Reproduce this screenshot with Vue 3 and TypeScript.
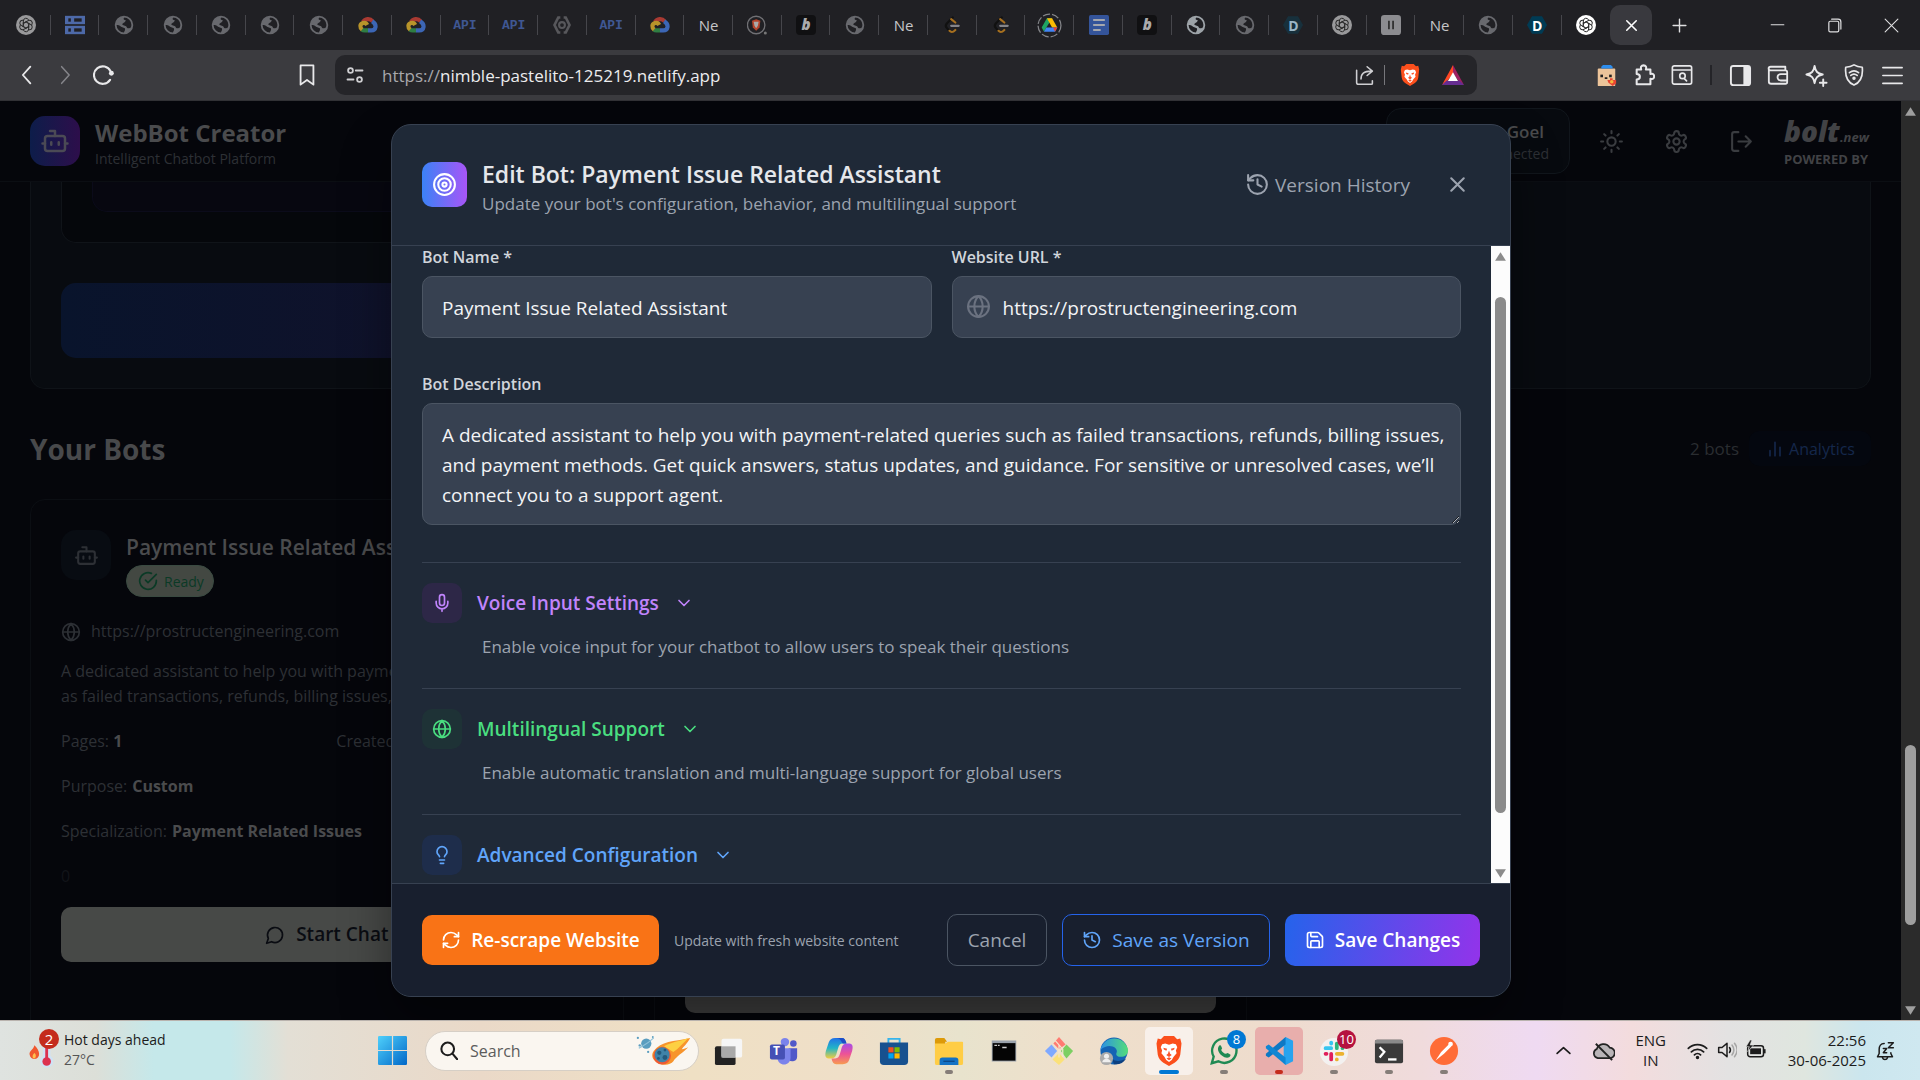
<script setup lang="ts">
import { h, ref } from 'vue'

const line = (w: number, body: string, extra = '') =>
  `<g fill="none" stroke="currentColor" stroke-width="${w}" stroke-linecap="round" stroke-linejoin="round" ${extra}>${body}</g>`

const globePaths = '<circle cx="12" cy="12" r="10"/><path d="M12 2a14.5 14.5 0 0 0 0 20 14.5 14.5 0 0 0 0-20M2 12h20"/>'
const knot = '<path d="M8.800 12V7.200a3.300 3.300 0 0 1 6.300-1.400M12 8.300l4.200 2.400"/>'
const lion = '<path d="M6.500 6.600 9 6l3 .9L15 6l2.500.6L18.600 9l-1.100 2.600.600 2.200-2.400 2.700-1.500 2.600L12 20.800l-2.200-1.700-1.500-2.600-2.400-2.700.600-2.200L5.400 9z" fill="#fff"/><path d="M7.500 9.300l3 .900-.600 1.500-2-.900zM16.500 9.300l-3 .900.600 1.500 2-.900zM12 11.500l.900 2.700 1.300.900L12 16.800l-2.200-1.700 1.300-.900zM10 18l2-1 2 1-2 1.300z" fill="#fb542b"/>'

const icons: Record<string, string> = {
  bot: line(2, '<path d="M12 8V4H8"/><rect width="16" height="12" x="4" y="8" rx="2"/><path d="M2 14h2M20 14h2M15 13v2M9 13v2"/>'),
  target: line(2, '<circle cx="12" cy="12" r="10"/><circle cx="12" cy="12" r="6"/><circle cx="12" cy="12" r="2"/>'),
  history: line(2, '<path d="M3 12a9 9 0 1 0 9-9 9.750 9.750 0 0 0-6.740 2.740L3 8"/><path d="M3 3v5h5M12 7v5l4 2"/>'),
  x: line(2, '<path d="M18 6 6 18M6 6l12 12"/>'),
  globe: line(2, globePaths),
  mic: line(2, '<path d="M12 2a3 3 0 0 0-3 3v7a3 3 0 0 0 6 0V5a3 3 0 0 0-3-3Z"/><path d="M19 10v2a7 7 0 0 1-14 0v-2M12 19v3"/>'),
  down: line(2, '<path d="m6 9 6 6 6-6"/>'),
  bulb: line(2, '<path d="M15 14c.2-1 .7-1.700 1.500-2.500 1-.9 1.500-2.200 1.500-3.500A6 6 0 0 0 6 8c0 1 .2 2.200 1.500 3.500.7.7 1.300 1.500 1.500 2.500M9 18h6M10 22h4"/>'),
  refresh: line(2, '<path d="M3 12a9 9 0 0 1 9-9 9.750 9.750 0 0 1 6.740 2.740L21 8"/><path d="M21 3v5h-5M21 12a9 9 0 0 1-9 9 9.750 9.750 0 0 1-6.740-2.740L3 16"/><path d="M8 16H3v5"/>'),
  save: line(2, '<path d="M15.200 3a2 2 0 0 1 1.400.6l3.800 3.800a2 2 0 0 1 .6 1.400V19a2 2 0 0 1-2 2H5a2 2 0 0 1-2-2V5a2 2 0 0 1 2-2z"/><path d="M17 21v-7a1 1 0 0 0-1-1H8a1 1 0 0 0-1 1v7M7 3v4a1 1 0 0 0 1 1h7"/>'),
  check: line(2, '<path d="M22 11.080V12a10 10 0 1 1-5.930-9.140"/><path d="m9 11 3 3L22 4"/>'),
  chat: line(2, '<path d="M7.900 20A9 9 0 1 0 4 16.100L2 22Z"/>'),
  chart: line(2, '<path d="M18 20V10M12 20V4M6 20v-6"/>'),
  sun: line(2, '<circle cx="12" cy="12" r="4"/><path d="M12 2v2M12 20v2M4.930 4.930l1.410 1.410M17.660 17.660l1.410 1.410M2 12h2M20 12h2M6.340 17.660l-1.410 1.410M19.070 4.930l-1.410 1.410"/>'),
  gear: line(2, '<path d="M12.220 2h-.44a2 2 0 0 0-2 2v.18a2 2 0 0 1-1 1.730l-.43.25a2 2 0 0 1-2 0l-.15-.08a2 2 0 0 0-2.730.73l-.22.38a2 2 0 0 0 .73 2.730l.15.1a2 2 0 0 1 1 1.720v.51a2 2 0 0 1-1 1.740l-.15.09a2 2 0 0 0-.73 2.730l.22.38a2 2 0 0 0 2.730.73l.15-.08a2 2 0 0 1 2 0l.43.25a2 2 0 0 1 1 1.730V20a2 2 0 0 0 2 2h.44a2 2 0 0 0 2-2v-.18a2 2 0 0 1 1-1.730l.43-.25a2 2 0 0 1 2 0l.15.08a2 2 0 0 0 2.730-.73l.22-.39a2 2 0 0 0-.73-2.730l-.15-.08a2 2 0 0 1-1-1.740v-.5a2 2 0 0 1 1-1.740l.15-.09a2 2 0 0 0 .73-2.730l-.22-.38a2 2 0 0 0-2.730-.73l-.15.08a2 2 0 0 1-2 0l-.43-.25a2 2 0 0 1-1-1.730V4a2 2 0 0 0-2-2z"/><circle cx="12" cy="12" r="3"/>'),
  logout: line(2, '<path d="M9 21H5a2 2 0 0 1-2-2V5a2 2 0 0 1 2-2h4M16 17l5-5-5-5M21 12H9"/>'),
  up: '<path d="M12 4 22 20H2z" fill="currentColor"/>',
  dn: '<path d="M12 20 2 4h20z" fill="currentColor"/>',

  gpt: '<circle cx="12" cy="12" r="12" fill="currentColor"/><g fill="none" stroke="#2a2a2a" stroke-width="1.200" stroke-linecap="round">' +
    [0, 60, 120, 180, 240, 300].map(a => `<g transform="rotate(${a} 12 12)">${knot}</g>`).join('') + '</g>',
  server: '<g fill="#4d69a8"><rect x="0" y="1" width="24" height="10"/><rect x="0" y="13" width="24" height="10"/></g><g fill="#202024"><rect x="4" y="4" width="3" height="4"/><rect x="11" y="4" width="9" height="4"/><rect x="4" y="16" width="3" height="4"/><rect x="11" y="16" width="9" height="4"/></g>',
  world: '<circle cx="12" cy="12" r="10" fill="none" stroke="currentColor" stroke-width="2.200"/><path d="M13 2c-2 2-2 4 1 4 0 3-3 3-4 5 0 2 4 1 5 3 1 3 4 2 6 0C20 19 16 22 12 22c0-3 2-3 1-6-2-1-4-1-6-3-2-1-3-1-5-1C2 6 7 2 13 2z" fill="currentColor"/>',
  cloud: '<g fill="none" stroke-width="5"><path d="M6 8.500A7 7 0 0 1 17.500 7.500" stroke="#a93a32"/><path d="M17 7.500c3 2 4.500 4 4 7-.5 3-2.500 4-5 4H12" stroke="#3c66b5"/><path d="M12 18.500H8c-1.500 0-2.500-.3-3.500-1" stroke="#2f7d43"/><path d="M5 17.500C2 15 2 11 6 9.700c2-.6 4 .3 5 2.300" stroke="#b8942a"/></g>',
  hex: '<path d="M10 3H7.500L3 12l4.500 9H10M14 3h2.500l4.500 9-4.500 9H14" fill="none" stroke="#57575b" stroke-width="3.200"/><circle cx="12" cy="12" r="3.500" fill="none" stroke="#57575b" stroke-width="2.500"/>',
  lionTab: '<circle cx="11" cy="12" r="10.500" fill="none" stroke="#707074" stroke-width="1.600"/><path d="M6 7l5-2 5 2-1 8-4 4-4-4z" fill="#b5452d"/><path d="M8 8h6l-1 5-2 3-2-3z" fill="#aaa"/><circle cx="22" cy="21.500" r="1.800" fill="#777"/>',
  leet: '<g fill="none" stroke-width="2.600" stroke-linecap="round"><path d="M13 3 6 10c-2 2-2 4 0 6l3 3" stroke="#111"/><path d="M11 5l5 4M9 19c3 3 5 1 7-1" stroke="#a7701f"/><path d="M11 13h9" stroke="#85858a"/></g>',
  drive: '<circle cx="12" cy="12" r="11" fill="none" stroke="#85868a" stroke-width="1.200" stroke-dasharray="7 2"/><path d="M9.500 5h5l-5.500 9-2.300 4L4.500 14z" fill="#1fa463"/><path d="M9.500 5h5l5 9h-5z" fill="#fbbc04"/><path d="M6.700 18 9 14h10.500l-2.200 4z" fill="#4285f4"/><path d="M15.500 14h4l-2.200 4z" fill="#ea4335"/>',
  docs: '<rect x="0" y="0" width="24" height="24" rx="2" fill="#34549a"/><path d="M5 6h14M5 12h14M5 18h9" stroke="#a5a7ad" stroke-width="2.400"/>',
  dhex: '<path d="M6 1.500h12L24 12l-6 10.500H6L0 12z" fill="currentColor"/>',
  pause: '<rect width="24" height="24" rx="4" fill="#8c8c90"/><path d="M9.500 7v10M14.500 7v10" stroke="#333" stroke-width="2.200"/>',
  plus: line(2, '<path d="M12 3v18M3 12h18"/>'),
  min: line(1.5, '<path d="M3 11h18"/>'),
  restore: line(1.700, '<rect x="4" y="6" width="14" height="15" rx="2"/><path d="M8 3h9a4 4 0 0 1 4 4v10"/>'),
  close: line(1.500, '<path d="M3 3l18 18M21 3 3 21"/>'),
  back: line(2.200, '<path d="M16 2 7 12l9 10"/>'),
  fwd: line(1.800, '<path d="M8 2l9 10-9 10"/>'),
  reload: line(2.400, '<path d="M19.500 17A10 10 0 1 1 20 7"/>') + '<circle cx="21" cy="9.500" r="2.800" fill="currentColor"/>',
  mark: line(2, '<path d="M5 1.500h14v21l-7-5-7 5z"/>'),
  tune: line(2.400, '<circle cx="6" cy="6" r="3.200"/><path d="M13 6h9M2 18h8"/><circle cx="18" cy="18" r="3.200"/>'),
  share: line(1.800, '<path d="M3 6v14a2 2 0 0 0 2 2h15a1 1 0 0 0 1-1v-3M8 16c0-6 3-9 12-9M15 2l6 5-6 5"/>'),
  brave: '<path d="M12 0h4l2.500 2.500L21 2l1 4-1 9c-.5 3-2.500 5-4.500 6.300L12 24l-4.500-2.700C5.500 20 3.500 18 3 15L2 6l1-4 2.500.5L8 0z" fill="#fb4f1c"/>' + lion,
  bat: '<path d="M12 1 0 23l5-3 7-10z" fill="#ff4724"/><path d="M12 1l12 22-5-3-7-10z" fill="#9e1f63"/><path d="M0 23h24l-5-5H5z" fill="#662d91"/><path d="m12 9 5.500 9.500h-11z" fill="#fff"/>',
  crate: '<rect x="2" y="4" width="20" height="20" rx="1" fill="#ecc49a"/><path d="M6 4V2l2-2h9l2 2v2z" fill="#2d8ded"/><g fill="#222"><rect x="5" y="11" width="3" height="3"/><rect x="15" y="11" width="3" height="3"/><rect x="10" y="14" width="3" height="2"/></g><path d="M13 17h3v-2h3v2h4v4l-4 3-5-4z" fill="#e84532"/><circle cx="18" cy="19" r="2" fill="#f6b73c"/>',
  puzzle: line(2.200, '<path d="M4 6h5c-1-3 0-4.500 2.500-4.500S15 3 14 6h5v5c3-1 4 .5 4 2.500s-1 3.500-4 2.500v6H4v-5c3 0 3.500-1.500 3.500-3S7 11 4 11z"/>'),
  find: line(1.800, '<rect x="1.500" y="2" width="21" height="20" rx="2"/><path d="M2 6.500h20M14.500 16l2.500 2.500"/><circle cx="12.500" cy="13" r="3"/>'),
  panel: '<rect x="2" y="2" width="20" height="20" rx="2.500" fill="none" stroke="currentColor" stroke-width="2"/><path d="M15 2h5a2 2 0 0 1 2 2v16a2 2 0 0 1-2 2h-5z" fill="currentColor"/>',
  wallet: line(2, '<path d="M2 5v14c0 1.500 1 2.500 2.500 2.500H20a2 2 0 0 0 2-2V9a2 2 0 0 0-2-2H4C1 7 1 3 4 3h16v3M22 11h-7a3.500 3.500 0 0 0 0 7h7"/>'),
  sparkle: line(2, '<path d="M10 2c1 6 3 8 8.500 9C13 12 11 14 10 20 9 14 7 12 1.500 11 7 10 9 8 10 2zM19 16v7M15.500 19.500h7"/>'),
  vpn: line(1.800, '<path d="M12 1c3 2 6 2.500 9 2.500C22 13 19 20 12 23 5 20 2 13 3 3.500 6 3.500 9 3 12 1z"/><path d="M7 9.500c3-2.500 7-2.500 10 0M8.500 12.500c2-1.700 5-1.700 7 0"/><circle cx="12" cy="15.500" r="1"/>'),
  menu: line(1.900, '<path d="M1 3h22M1 12h22M1 21h22"/>'),

  weather: '<path d="M6 12c3 3 5 6 5 9a5 5 0 0 1-10 1c-1-4 4-5 5-10z" fill="#f0582f"/><path d="M6 20c2 1 2 5 0 6-3-1-2-4 0-6z" fill="#ffc04d"/><path d="M15 6h8v17a7 7 0 1 1-8 0z" fill="#cfe2f5"/><path d="M19 10v18" stroke="#dc3150" stroke-width="3"/><circle cx="19" cy="29" r="4.500" fill="#dc3150"/>',
  win: '<defs><linearGradient id="winfill" x2="1" y2="1"><stop stop-color="#4fd0fb"/><stop offset="1" stop-color="#0167c8"/></linearGradient></defs><path d="M0 1a1 1 0 0 1 1-1h10.500v11.500H0zM12.500 0H23a1 1 0 0 1 1 1v10.500H12.500zM0 12.500h11.500V24H1a1 1 0 0 1-1-1zM12.500 12.500H24V23a1 1 0 0 1-1 1H12.500z" fill="url(#winfill)"/>',
  search: line(2.600, '<circle cx="11" cy="10" r="8"/><path d="m17 16 6 7"/>'),
  comet: '<g fill="#5a9dbf"><circle cx="11" cy="9" r="5.500"/><circle cx="2" cy="3" r="1.200"/><circle cx="4" cy="11" r="1.300"/><circle cx="13" cy="18" r="1.200"/><circle cx="18" cy="2" r="1"/></g><path d="M3 14c5-3 10-5 16-11" stroke="#8fc0d8" stroke-width="1.200" fill="none"/><path d="M19 17C27 6 40 7 58 3c-3 6-7 9-9 12 3 0 4-1 7-2-6 6-13 10-16 15-3 4-10 5-16 2-7-3-8-9-5-13z" fill="#f7942c"/><path d="M30 12c8-5 16-5 26-9-5 5-10 11-16 15z" fill="#fdd043"/><circle cx="28" cy="22" r="9.500" fill="#ee5a32"/><circle cx="28" cy="21" r="8" fill="#3f83a8"/><g fill="#245a7c"><circle cx="25" cy="19" r="2.300"/><circle cx="31" cy="24" r="2.600"/><circle cx="31" cy="16" r="1.500"/><circle cx="24" cy="25" r="1.500"/></g>',
  taskview: '<rect x="1" y="11" width="22" height="20" rx="2" fill="#222"/><rect x="8" y="3" width="22" height="20" rx="2" fill="#f6f6f6"/><path d="M8 11h15v12H8z" fill="#a9a9a9"/>',
  teams: '<circle cx="17" cy="6.500" r="4.500" fill="#7b83eb"/><circle cx="26" cy="8" r="3.500" fill="#5059c9"/><path d="M21 13h9v9a5 5 0 0 1-9 3z" fill="#5059c9"/><path d="M9 13h14v10c0 10-14 10-14 0z" fill="#7b83eb"/><rect x="1" y="9" width="16" height="16" rx="2" fill="#4650b5"/>',
  copilot: '<defs><linearGradient id="cpa" x2="0" y2="1"><stop stop-color="#2170e8"/><stop offset=".5" stop-color="#23b6c6"/><stop offset="1" stop-color="#f3cd3f"/></linearGradient><linearGradient id="cpb" x2="0" y2="1"><stop stop-color="#a64de8"/><stop offset=".5" stop-color="#ed5297"/><stop offset="1" stop-color="#f79a50"/></linearGradient></defs><path d="M12 2h7c3 0 4 2 5 6h-4c-3 0-4 2-5 5l-2 7c-1 3-3 4-6 4H5c-4 0-4-4-3-8l3-9c1-3 3-5 7-5z" fill="url(#cpa)"/><path d="M20 30h-7c-3 0-4-2-5-6h4c3 0 4-2 5-5l2-7c1-3 3-4 6-4h2c4 0 4 4 3 8l-3 9c-1 3-3 5-7 5z" fill="url(#cpb)"/><path d="M13 2h6c3 0 4 2 5 6h-4c-2-3-3-6-7-6z" fill="#1d4ec7"/>',
  store: '<path d="M10 8V3h12v5" fill="none" stroke="#35b4ec" stroke-width="2"/><path d="M1 7h30v20a4 4 0 0 1-4 4H5a4 4 0 0 1-4-4z" fill="#17518f"/><path d="M10 12h5.500v5.500H10z" fill="#f25022"/><path d="M16.500 12H22v5.500h-5.500z" fill="#7fba00"/><path d="M10 18.500h5.500V24H10z" fill="#00a4ef"/><path d="M16.500 18.500H22V24h-5.500z" fill="#ffb900"/>',
  files: '<path d="M1 4a2 2 0 0 1 2-2h8l3 4h-2v5H1z" fill="#dd9a08"/><path d="M1 8h11l3-2h15a1 1 0 0 1 1 1v22a2 2 0 0 1-2 2H3a2 2 0 0 1-2-2z" fill="#ffcd45"/><path d="M6 31v-5a3 3 0 0 1 3-3h14a3 3 0 0 1 3 3v5z" fill="#1372c4"/><path d="M10 27h12" stroke="#0b4a8a" stroke-width="1.500"/>',
  cmd: '<rect x="2" y="4" width="28" height="24" fill="#9aa2ab"/><rect x="3" y="7" width="26" height="20" fill="#050505"/><path d="M5 9.500h3M9 9.500h2M14 12h5" stroke="#ccc" stroke-width="1.500"/>',
  git: '<path d="M16 1l7 8-7 5-6-6z" fill="#ff7b72"/><path d="m24 9 7 7-7 8-6-8z" fill="#7ccf62"/><path d="m8 9 6 7-6 7-7-7z" fill="#7fa9ff"/><path d="m16 18 6 7-6 6-7-6z" fill="#fbe17a"/><path d="M12 5l8 9v8M16 9v14" stroke="#f4e6cf" stroke-width="1.300" fill="none"/>',
  edge: '<defs><linearGradient id="edgefill" x2="1"><stop stop-color="#2b8fe6"/><stop offset="1" stop-color="#52dd79"/></linearGradient></defs><circle cx="16" cy="16" r="14.500" fill="#1463b4"/><path d="M1.500 15A15 15 0 0 1 31 15c0 6-5 8-10 7-3-1-3-3-2-5 1-5-9-10-17.500-2z" fill="url(#edgefill)"/><path d="M12 20c2 8 10 8 17 4-3 5-8 7-13 6z" fill="#0d4080"/><circle cx="8" cy="24" r="7" fill="#aaa"/><circle cx="8" cy="21.500" r="2.700" fill="#eee"/><path d="M3.500 28c0-5 9-5 9 0z" fill="#eee"/>',
  whatsapp: '<path d="M3 29l2-7A13 13 0 1 1 10 27z" fill="none" stroke="#1f8a53" stroke-width="2.500"/><path d="M11 10c2-1 2 1 3 3l-1 2c1 2 3 4 5 4l2-1 3 2c0 4-6 4-9 1-4-3-6-8-3-11z" fill="#1f8a53"/>',
  vscode: '<path d="M23 1l8 4v22l-8 4-2-3V4z" fill="#27a3ef"/><path d="M23 1v8L5 23l-3-2v-2z" fill="#0e78c4"/><path d="M23 31v-8L5 9l-3 2v2z" fill="#1186d3"/>',
  slack: '<circle cx="16" cy="17" r="15" fill="#f3f1f0"/><g stroke-width="4" stroke-linecap="round"><path d="M7 13h6M13 7v1" stroke="#36c5f0"/><path d="M19 8v5M25 13h0" stroke="#2eb67d"/><path d="M19 19h6M19 25v0" stroke="#ecb22e"/><path d="M13 19v6M7 19h1" stroke="#e01e5a"/></g>',
  terminal: '<rect x="1" y="4" width="30" height="25" rx="2" fill="#3a3a3a"/><path d="M1 8V6a2 2 0 0 1 2-2h26a2 2 0 0 1 2 2v2z" fill="#8a8a8a"/><path d="M6 12l5 5-5 6" fill="none" stroke="#fff" stroke-width="2.500"/><path d="M15 25h9" stroke="#fff" stroke-width="2.500"/>',
  postman: '<circle cx="16" cy="16" r="15" fill="#ff6c37"/><path d="M7 26l6-9 8-8 3 2-8 8z" fill="#fff"/><circle cx="23" cy="8.500" r="2.500" fill="#fff"/>',
  caret: line(2.400, '<path d="m3 16 9-8 9 8"/>'),
  cloudOff: '<path d="M6 20a5 5 0 0 1-1-9.500A7.500 7.500 0 0 1 18.500 9 5.500 5.500 0 0 1 18 20z" fill="#b9b4b7" stroke="#222" stroke-width="1.800"/><path d="m4 5 17 17" stroke="#222" stroke-width="2"/>',
  wifi: line(2, '<path d="M1.500 9.500a15 15 0 0 1 21 0M5 13.500a10 10 0 0 1 14 0M8.500 17a5 5 0 0 1 7 0"/><circle cx="12" cy="20" r="1"/>'),
  sound: line(1.800, '<path d="M2 9v6h4l6 5V4L6 9zM15 9c1.500 2 1.500 4 0 6"/>') + line(1.800, '<path d="M18 6c3 4 3 8 0 12M21 4c4 5 4 11 0 16"/>', 'opacity=".3"'),
  battery: '<rect x="2" y="7" width="19" height="13" rx="3" fill="none" stroke="#1c1c1c" stroke-width="1.800"/><rect x="5" y="10" width="13" height="7" fill="#1c1c1c"/><path d="M22.500 11v5" stroke="#1c1c1c" stroke-width="2"/><path d="M5 0 0 8h4l-2 6 7-8H5l2-6z" fill="#1c1c1c" stroke="#e2e4e2" stroke-width=".7"/>',
  bell: line(1.800, '<path d="M11 3c-4 0-6 3-6 7v5l-2 4h18l-2-4v-1M9 20c1 3 5 3 6 0M16 2h6l-6 6h6M10 9h4l-4 5h4"/>'),
}

interface IconProps { n: string; s?: number }
const Icon = (p: IconProps) => {
  const box = ['weather', 'taskview', 'teams', 'copilot', 'store', 'files', 'cmd', 'git', 'edge', 'whatsapp', 'vscode', 'slack', 'terminal', 'postman'].includes(p.n)
    ? (p.n === 'weather' ? '0 0 26 36' : '0 0 32 32')
    : p.n === 'comet' ? '0 0 60 34' : '0 0 24 24'
  return h('svg', { viewBox: box, width: p.n === 'comet' ? 56 : (p.s ?? 20), height: p.s ?? 20, 'aria-hidden': 'true', innerHTML: icons[p.n] })
}

const tabs = ['gpt', 'server', 'world', 'world', 'world', 'world', 'world', 'cloud', 'cloud', 't:API', 't:API', 'hex', 't:API', 'cloud',
  't:Ne', 'lionTab', 't:b', 'world', 't:Ne', 'leet', 'leet', 'drive', 'docs', 't:b', 'world+', 'world', 't:D', 'gpt', 'pause', 't:Ne', 'world', 't:D+', 'gpt+']

const tabName = (t: string) => t.replace('+', '')
const textOf = (t: string) => tabName(t).slice(2)

const botName = ref('Payment Issue Related Assistant')
const websiteUrl = ref('https://prostructengineering.com')
const description = ref('A dedicated assistant to help you with payment-related queries such as failed transactions, refunds, billing issues, and payment methods. Get quick answers, status updates, and guidance. For sensitive or unresolved cases, we’ll connect you to a support agent.')
const query = ref('')

const sections = [
  { tone: 'purple', icon: 'mic', title: 'Voice Input Settings', text: 'Enable voice input for your chatbot to allow users to speak their questions' },
  { tone: 'green', icon: 'globe', title: 'Multilingual Support', text: 'Enable automatic translation and multi-language support for global users' },
  { tone: 'blue', icon: 'bulb', title: 'Advanced Configuration', text: '' },
]

interface App { icon: string; state?: string; badge?: string }
const apps: App[] = [
  { icon: 'taskview' }, { icon: 'teams' }, { icon: 'copilot' }, { icon: 'store' }, { icon: 'files', state: 'open' },
  { icon: 'cmd' }, { icon: 'git' }, { icon: 'edge' }, { icon: 'brave', state: 'active' },
  { icon: 'whatsapp', state: 'open', badge: '8' }, { icon: 'vscode', state: 'alert' },
  { icon: 'slack', state: 'open', badge: '10' }, { icon: 'terminal', state: 'open' }, { icon: 'postman', state: 'open' },
]
</script>

<template>
  <div class="screen">
    <div class="tabstrip">
      <div class="tabs">
        <button v-for="(t, i) in tabs" :key="i" class="tab" :class="{ bright: t.endsWith('+') }">
          <template v-if="t.startsWith('t:')">
            <span v-if="textOf(t) === 'D'" class="dtab"><Icon n="dhex" :s="20" /><b>D</b></span>
            <span v-else :class="'tab-' + textOf(t)">{{ textOf(t) }}</span>
          </template>
          <Icon v-else :n="tabName(t)" :s="t === 'drive' ? 25 : 20" />
        </button>
      </div>
      <div class="strip-end">
        <button class="tab-active" aria-label="Close tab"><Icon n="x" :s="19" /></button>
        <button class="new-tab" aria-label="New tab"><Icon n="plus" :s="17" /></button>
        <div class="window">
          <button aria-label="Minimize"><Icon n="min" :s="17" /></button>
          <button aria-label="Restore"><Icon n="restore" :s="17" /></button>
          <button aria-label="Close"><Icon n="close" :s="17" /></button>
        </div>
      </div>
    </div>

    <div class="toolbar">
      <div class="nav">
        <button aria-label="Back"><Icon n="back" :s="20" /></button>
        <button aria-label="Forward" class="dim"><Icon n="fwd" :s="20" /></button>
        <button aria-label="Reload"><Icon n="reload" :s="21" /></button>
      </div>
      <button class="bookmark" aria-label="Bookmark"><Icon n="mark" :s="22" /></button>
      <div class="address">
        <Icon n="tune" :s="18" />
        <span class="url"><i>https://</i>nimble-pastelito-125219.netlify.app</span>
        <button class="share" aria-label="Share"><Icon n="share" :s="21" /></button>
        <span class="bar"></span>
        <button aria-label="Shields"><Icon n="brave" :s="22" /></button>
        <button class="bat" aria-label="Rewards"><Icon n="bat" :s="22" /></button>
      </div>
      <div class="tools">
        <button aria-label="Extension"><Icon n="crate" :s="21" /></button>
        <button aria-label="Extensions"><Icon n="puzzle" :s="22" /></button>
        <button aria-label="Search page"><Icon n="find" :s="22" /></button>
        <span class="bar dark"></span>
        <button aria-label="Sidebar"><Icon n="panel" :s="23" /></button>
        <button aria-label="Wallet"><Icon n="wallet" :s="22" /></button>
        <button aria-label="Assistant"><Icon n="sparkle" :s="23" /></button>
        <button aria-label="VPN"><Icon n="vpn" :s="22" /></button>
        <button aria-label="Menu"><Icon n="menu" :s="21" /></button>
      </div>
    </div>

    <main class="view">
      <div class="page">
        <header class="top">
          <div class="logo"><Icon n="bot" :s="30" /></div>
          <div class="brand">
            <h1>WebBot Creator</h1>
            <p>Intelligent Chatbot Platform</p>
          </div>
          <div class="user"><strong>Goel</strong><span>Connected</span></div>
          <button aria-label="Theme"><Icon n="sun" :s="25" /></button>
          <button aria-label="Settings"><Icon n="gear" :s="25" /></button>
          <button aria-label="Sign out"><Icon n="logout" :s="25" /></button>
          <div class="bolt"><b>bolt<small>.new</small></b><span>POWERED BY</span></div>
        </header>

        <div class="content">
          <section class="creator">
            <div class="creator-inner"><div class="creator-box"></div></div>
            <div class="creator-cta"></div>
          </section>

          <div class="bots-head">
            <h2>Your Bots</h2>
            <span>2 bots</span>
            <button><Icon n="chart" :s="20" />Analytics</button>
          </div>

          <div class="bots">
            <article class="card">
              <div class="card-head">
                <div class="card-icon"><Icon n="bot" :s="25" /></div>
                <div>
                  <h3>Payment Issue Related Assistant</h3>
                  <span class="ready"><Icon n="check" :s="20" />Ready</span>
                </div>
              </div>
              <p class="site"><Icon n="globe" :s="20" />https://prostructengineering.com</p>
              <p class="about">A dedicated assistant to help you with payment-related queries such<br>as failed transactions, refunds, billing issues, and payment methods.</p>
              <p class="meta"><span>Pages: <b>1</b></span><span class="created">Created:</span></p>
              <p class="meta">Purpose: <b>Custom</b></p>
              <p class="meta">Specialization: <b>Payment Related Issues</b></p>
              <p class="zero">0</p>
              <button class="start"><Icon n="chat" :s="20" />Start Chat</button>
            </article>
            <article class="card second"><div class="start"></div></article>
          </div>
        </div>

        <div class="layer">
          <div class="modal" role="dialog" aria-labelledby="modal-title">
            <div class="modal-head">
              <div class="modal-icon"><Icon n="target" :s="25" /></div>
              <div class="modal-title">
                <h2 id="modal-title">Edit Bot: Payment Issue Related Assistant</h2>
                <p>Update your bot's configuration, behavior, and multilingual support</p>
              </div>
              <button class="versions"><Icon n="history" :s="25" />Version History</button>
              <button aria-label="Close dialog"><Icon n="x" :s="25" /></button>
            </div>

            <div class="modal-body">
              <form class="fields" @submit.prevent>
                <div class="row">
                  <div class="field">
                    <label for="bot-name">Bot Name *</label>
                    <input id="bot-name" v-model="botName" type="text">
                  </div>
                  <div class="field">
                    <label for="bot-url">Website URL *</label>
                    <div class="with-icon">
                      <Icon n="globe" :s="25" />
                      <input id="bot-url" v-model="websiteUrl" type="url">
                    </div>
                  </div>
                </div>
                <div class="field">
                  <label for="bot-about">Bot Description</label>
                  <textarea id="bot-about" v-model="description" rows="3" spellcheck="false"></textarea>
                </div>
                <section v-for="s in sections" :key="s.title" class="group" :class="s.tone">
                  <button class="group-head">
                    <span class="chip"><Icon :n="s.icon" :s="20" /></span>{{ s.title }}<Icon n="down" :s="20" />
                  </button>
                  <p v-if="s.text">{{ s.text }}</p>
                </section>
              </form>
              <div class="scroll light">
                <Icon n="up" :s="13" />
                <div class="lane"><div class="thumb"></div></div>
                <Icon n="dn" :s="13" />
              </div>
            </div>

            <div class="modal-foot">
              <button class="rescrape"><Icon n="refresh" :s="20" />Re-scrape Website</button>
              <small>Update with fresh website content</small>
              <button class="cancel">Cancel</button>
              <button class="as-version"><Icon n="history" :s="20" />Save as Version</button>
              <button class="save"><Icon n="save" :s="20" />Save Changes</button>
            </div>
          </div>
        </div>
      </div>
      <div class="scroll">
        <Icon n="up" :s="13" />
        <div class="lane"><div class="thumb"></div></div>
        <Icon n="dn" :s="13" />
      </div>
    </main>

    <footer class="taskbar">
      <div class="weather">
        <div class="weather-icon"><Icon n="weather" :s="34" /><em>2</em></div>
        <p>Hot days ahead<span>27°C</span></p>
      </div>
      <div class="dock">
        <button class="start-menu" aria-label="Start"><Icon n="win" :s="29" /></button>
        <label class="find"><Icon n="search" :s="19" /><input v-model="query" type="text" placeholder="Search"><Icon n="comet" :s="32" /></label>
        <button v-for="a in apps" :key="a.icon" class="app" :class="a.state" :aria-label="a.icon">
          <Icon :n="a.icon" :s="a.icon === 'cmd' ? 28 : 30" />
          <b v-if="a.icon === 'teams'" class="tee">T</b>
          <em v-if="a.badge" :class="'badge-' + a.icon">{{ a.badge }}</em>
        </button>
      </div>
      <div class="tray">
        <Icon n="caret" :s="17" />
        <Icon class="sync" n="cloudOff" :s="23" />
        <p class="lang">ENG<br>IN</p>
        <div class="status">
          <Icon n="wifi" :s="21" /><Icon n="sound" :s="20" /><Icon n="battery" :s="20" />
        </div>
        <p class="clock">22:56<br>30-06-2025</p>
        <Icon n="bell" :s="20" />
      </div>
    </footer>
  </div>
</template>

<style>
body { margin: 0; background: #05060b; }
</style>

<style scoped>
.screen { display: flex; flex-direction: column; height: 100vh; overflow: hidden; font-family: "Open Sans", "Noto Sans", sans-serif; font-size: 16px; }
.screen * { box-sizing: border-box; }
h1, h2, h3, p { margin: 0; }
button { display: flex; align-items: center; justify-content: center; padding: 0; border: 0; background: none; color: inherit; font: inherit; flex: none; white-space: nowrap; cursor: pointer; }
svg { display: block; flex: none; }
i, em { font-style: normal; }

.tabstrip { display: flex; height: 50px; flex: none; background: #202024; color: #dedee0; }
.tabs { display: flex; flex: 1; min-width: 0; padding-left: 2px; }
.tab { flex: 1 1 0; min-width: 0; position: relative; color: #68696e; }
.tab:not(:last-child)::after { content: ""; position: absolute; right: 0; top: 15px; height: 20px; width: 1px; background: #46464b; }
.tab.bright { color: #9da3a8; }
.tab:first-child, .tab:nth-child(28) { color: #99999b; }
.tab:last-child { color: #fff; }
.tab-API { color: #3f5792; font: bold 13px "Liberation Mono", monospace; }
.tab-Ne { color: #c6c6c8; font-size: 15px; }
.tab-b { width: 20px; height: 20px; border-radius: 4px; background: #101012; color: #aaaaac; font-size: 15px; font-weight: 800; font-style: italic; line-height: 19px; }
.dtab { display: grid; place-items: center; color: #17303c; }
.dtab > * { grid-area: 1 / 1; }
.dtab b { color: #9ab6c6; font-size: 14px; }
.bright .dtab { color: #003b54; }
.bright .dtab b { color: #fff; }
.strip-end { display: flex; width: 310px; flex: none; align-items: center; }
.tab-active { width: 42px; height: 40px; border-radius: 10px; background: #39393e; color: #fff; }
.new-tab { width: 54px; }
.window { display: flex; flex: 1; justify-content: flex-end; }
.window button { width: 57px; }

.toolbar { display: flex; align-items: center; height: 51px; flex: none; background: #3b3b3f; border-bottom: 1px solid #313135; color: #e8e8ea; }
.nav { display: flex; width: 294px; padding-left: 8px; }
.nav button { width: 38px; }
.dim { color: #85858a; }
.bookmark { width: 25px; margin-right: 16px; }
.address { display: flex; align-items: center; width: 1142px; flex: 0 1 auto; height: 40px; border-radius: 10px; background: #252529; padding-left: 11px; color: #cfcfd2; }
.url { flex: 1; padding-left: 18px; color: #ececee; font-size: 17px; }
.url i { color: #a8a8ac; }
.address button { width: 43px; }
.address .share { width: 30px; margin-right: 5px; }
.bar { width: 1px; height: 20px; background: #77777b; margin-right: 3px; }
.address .bat { margin-right: 3px; }
.bar.dark { width: 2px; background: #242428; margin: 0 9px; }
.tools { display: flex; align-items: center; margin-left: auto; padding-right: 9px; }
.tools button { width: 38px; }

.view { display: flex; flex: 1; min-height: 0; background: #05060b; }
.page { position: relative; flex: 1; min-width: 0; overflow: hidden; }
.scroll { display: flex; flex-direction: column; align-items: center; flex: none; width: 19px; padding: 4px 0 3px; background: #2b2b2b; color: #9f9f9f; }
.lane { flex: 1; width: 11px; padding-top: 627px; }
.thumb { height: 180px; border-radius: 6px; background: #9f9f9f; }

.top { display: flex; align-items: center; height: 81px; padding: 0 30px; border-bottom: 1px solid #0b0e13; color: #3a3c40; }
.top button { width: 65px; }
.logo { display: grid; place-items: center; width: 50px; height: 50px; margin-right: 15px; border-radius: 15px; background: linear-gradient(90deg, #0d1d4a, #2d0e4b); color: #4b4a55; }
.brand { flex: 1; padding-top: 4px; }
.brand h1 { font-size: 24px; line-height: 32px; color: #4a4b4d; }
.brand p { font-size: 14px; line-height: 20px; color: #2d3035; }
.user { display: flex; flex-direction: column; align-items: flex-end; justify-content: center; width: 184px; height: 66px; margin-right: 9px; padding: 4px 20px 0 0; border: 1px solid #11161c; border-radius: 15px; background: #070a0f; line-height: 22px; }
.user strong { padding-right: 5px; color: #4a4b4d; font-weight: 600; font-size: 17px; }
.user span { color: #2d3035; font-size: 14px; }
.bolt { display: flex; flex-direction: column; width: 87px; margin-left: 10px; color: #414245; font-weight: 700; }
.bolt b { font-size: 28px; line-height: 30px; font-style: italic; font-weight: 800; }
.bolt small { font-size: 13px; font-weight: 700; }
.bolt span { font-size: 13px; line-height: 14px; }

.content { padding: 0 30px; }
.creator { padding: 0 30px 30px; border: 1px solid #0f1318; border-top: 0; border-radius: 0 0 15px 15px; background: #080b10; }
.creator-inner { width: 60%; height: 61px; padding: 0 30px; border: 1px solid #101419; border-top: 0; border-radius: 0 0 15px 15px; background: #05070b; }
.creator-box { height: 30px; border: 1px solid #0b0b1a; border-top: 0; border-radius: 0 0 15px 15px; background: #070710; }
.creator-cta { width: 60%; height: 75px; margin-top: 40px; border-radius: 15px; background: linear-gradient(90deg, #09142c, #10122b 35%, #190d30); }
.bots-head { display: flex; align-items: center; height: 35px; margin: 42px 0 33px; color: #2a2d31; font-size: 17px; }
.bots-head h2 { flex: 1; color: #48494b; font-size: 28px; }
.bots-head button { gap: 4px; width: 122px; height: 35px; margin-left: 10px; border-radius: 10px; background: #04070f; color: #15274b; font-size: 16px; }
.bots { display: grid; grid-template-columns: repeat(3, minmax(0, 1fr)); gap: 30px; }
.card { height: 560px; padding: 30px; border: 1px solid #0b0e13; border-radius: 15px; color: #2d3035; line-height: 25px; }
.card b { color: #4a4b4d; }
.card-head { display: flex; gap: 15px; height: 68px; }
.card-icon { display: grid; place-items: center; width: 50px; height: 50px; flex: none; border-radius: 15px; background: #080c12; color: #2d3035; }
.card h3 { color: #4a4b4d; font-size: 21px; line-height: 35px; font-weight: 600; white-space: nowrap; }
.ready { display: flex; align-items: center; gap: 6px; width: 88px; height: 32px; padding-left: 11px; border: 1px solid #3a4a41; border-radius: 16px; background: #434842; color: #0b3a26; font-size: 14px; font-weight: 500; }
.site { display: flex; align-items: center; gap: 10px; margin: 21px 0 15px; }
.about { margin-bottom: 20px; white-space: nowrap; }
.meta { display: flex; gap: 5px; margin-bottom: 20px; }
.created { margin-left: 209px; }
.zero { color: #121419; }
.start { gap: 11px; width: 100%; height: 55px; margin-top: 18px; border-radius: 10px; background: #474947; color: #0a0c12; font-size: 19px; font-weight: 600; }
.card.second { display: flex; align-items: flex-start; }
.second .start { background: #3f3f3f; margin-top: 428px; }

.layer { position: absolute; inset: 0; display: flex; align-items: center; justify-content: center; padding-left: 1px; }
.modal { display: flex; flex-direction: column; width: 1120px; max-width: 95%; height: 95%; border: 1px solid #374151; border-radius: 20px; background: #1f2937; color: #e5e7eb; box-shadow: 0 25px 50px rgba(0, 0, 0, 0.4); overflow: hidden; }
.modal-head { display: flex; align-items: center; height: 121px; flex: none; padding: 0 40px 0 30px; border-bottom: 1px solid #374151; color: #9ca3af; }
.modal-icon { display: grid; place-items: center; width: 45px; height: 45px; margin-right: 15px; border-radius: 10px; background: linear-gradient(90deg, #3b82f6, #a855f7); color: #fff; }
.modal-title { flex: 1; padding-top: 4px; }
.modal-title h2 { color: #e5e7eb; font-size: 23px; line-height: 34px; font-weight: 600; }
.modal-title p { font-size: 17px; line-height: 25px; }
.versions { gap: 5px; margin-right: 35px; font-size: 19px; }
.modal-body { display: flex; flex: 1; min-height: 0; overflow: hidden; }
.fields { flex: 1; padding: 0 30px; min-width: 0; }
.row { display: flex; gap: 20px; margin-bottom: 35px; }
.field { display: flex; flex-direction: column; gap: 8px; flex: 1; min-width: 0; }
.field label { color: #d1d5db; font-size: 16px; line-height: 22px; font-weight: 600; }
input, textarea { display: block; width: 100%; font: inherit; }
.field input, .field textarea { border: 1px solid #4b5563; border-radius: 10px; background: #374151; color: #f3f4f6; font-size: 19px; outline: 0; }
.field input { height: 62px; padding: 2px 19px 0; }
.field textarea { height: 122px; padding: 16px 8px 14px 19px; line-height: 30px; resize: vertical; overflow: hidden; }
.with-icon { display: grid; align-items: center; }
.with-icon > * { grid-area: 1 / 1; }
.with-icon svg { z-index: 1; margin-left: 14px; color: #6b7280; }
.field .with-icon input { padding-left: 50px; }
.group { height: 126px; padding-top: 20px; border-top: 1px solid #374151; }
.field + .group { margin-top: 37px; }
.group-head { gap: 15px; font-size: 19px; font-weight: 600; }
.chip { display: grid; place-items: center; width: 40px; height: 40px; border-radius: 10px; }
.group p { padding: 11px 0 0 60px; color: #9ca3af; font-size: 17px; line-height: 25px; }
.purple button { color: #c084fc; }
.purple .chip { background: #2d2747; }
.green button { color: #4ade80; }
.green .chip { background: #1e3236; }
.blue button { color: #60a5fa; }
.blue .chip { background: #1e2d4b; }
.scroll.light { background: #fcfcfc; color: #8b8b8b; }
.light .lane { padding-top: 34px; }
.light .thumb { height: 516px; background: #8b8b8b; }
.modal-foot { display: flex; align-items: center; height: 113px; flex: none; padding: 0 30px; border-top: 1px solid #374151; background: #181f2e; font-size: 19px; }
.modal-foot button { gap: 10px; height: 52px; border-radius: 10px; }
.modal-foot small { flex: 1; padding-left: 15px; color: #9ca3af; font-size: 14px; }
.modal-foot .rescrape { width: 237px; height: 50px; background: #f97316; color: #fff; font-weight: 600; }
.cancel { width: 100px; border: 1px solid #4b5563; color: #9ca3af; }
.modal-foot .as-version { width: 208px; margin: 0 15px; border: 1px solid #2563eb; color: #60a5fa; }
.save { width: 195px; background: linear-gradient(100deg, #2563eb, #9333ea); color: #fff; font-weight: 600; }

.taskbar { display: flex; align-items: center; height: 60px; flex: none; border-top: 1px solid #b9b3ae; color: #1c1c1c; font-size: 15px; line-height: 20px;
  background: linear-gradient(90deg, #dfe3e0 0%, #dcdfd8 5%, #c5e8ea 8%, #c5e8ea 12%, #e3dfd5 15%, #ead9c8 25%, #efe0c4 36%, #efdfc8 44%, #e8e3cd 50%, #efdfcb 56%, #eedccd 66%, #f0dbdc 74%, #efdaf2 80%, #f3dcdd 85%, #e3e2e2 90%, #dfe6df 94%, #cbe6ee 97%, #cfe8f0 100%); }
.taskbar p { padding-bottom: 2px; }
.weather { display: flex; align-items: center; width: 368px; padding-left: 24px; }
.weather-icon { position: relative; width: 40px; }
.weather-icon em { position: absolute; left: 15px; top: -5px; width: 20px; height: 20px; border-radius: 50%; background: #c42b1c; color: #fff; text-align: center; }
.weather p { font-size: 14px; }
.weather span { display: block; color: #555; }
.dock { display: flex; align-items: center; flex: 1; }
.start-menu { width: 48px; }
.find { display: flex; align-items: center; width: 274px; height: 40px; margin: 0 6px 0 9px; padding: 0 6px 0 13px; border: 1px solid #d6cfc6; border-radius: 20px; background: #faf6f0; }
.find input { flex: 1; min-width: 0; padding: 0 0 0 12px; border: 0; background: none; font-size: 16px; outline: 0; }
.find input::placeholder { color: #5c5c5c; opacity: 1; }
.app { position: relative; width: 48px; height: 48px; margin-right: 7px; border-radius: 5px; }
.app.active { background: #f8f0ea; }
.app.alert { background: #e8aeac; }
.app.open::after, .app.active::after, .app.alert::after { content: ""; position: absolute; bottom: 1px; width: 8px; height: 4px; border-radius: 2px; background: #857d78; }
.app.active::after { width: 20px; background: #0078d4; }
.app.alert::after { background: #c42b1c; }
.app em { position: absolute; right: 2px; top: 3px; width: 19px; height: 19px; border-radius: 10px; background: #0078d4; color: #fff; font-size: 13px; line-height: 19px; text-align: center; }
.app .badge-slack { background: #b5123f; }
.tee { position: absolute; left: 13px; top: 14px; color: #fff; font-size: 12px; }
.tray { display: flex; align-items: center; padding-right: 25px; }
.sync { margin: 0 19px 0 20px; }
.lang { width: 34px; text-align: center; }
.status { display: flex; gap: 9px; margin: 0 22px 0 19px; }
.clock { margin-right: 9px; text-align: right; }
</style>
